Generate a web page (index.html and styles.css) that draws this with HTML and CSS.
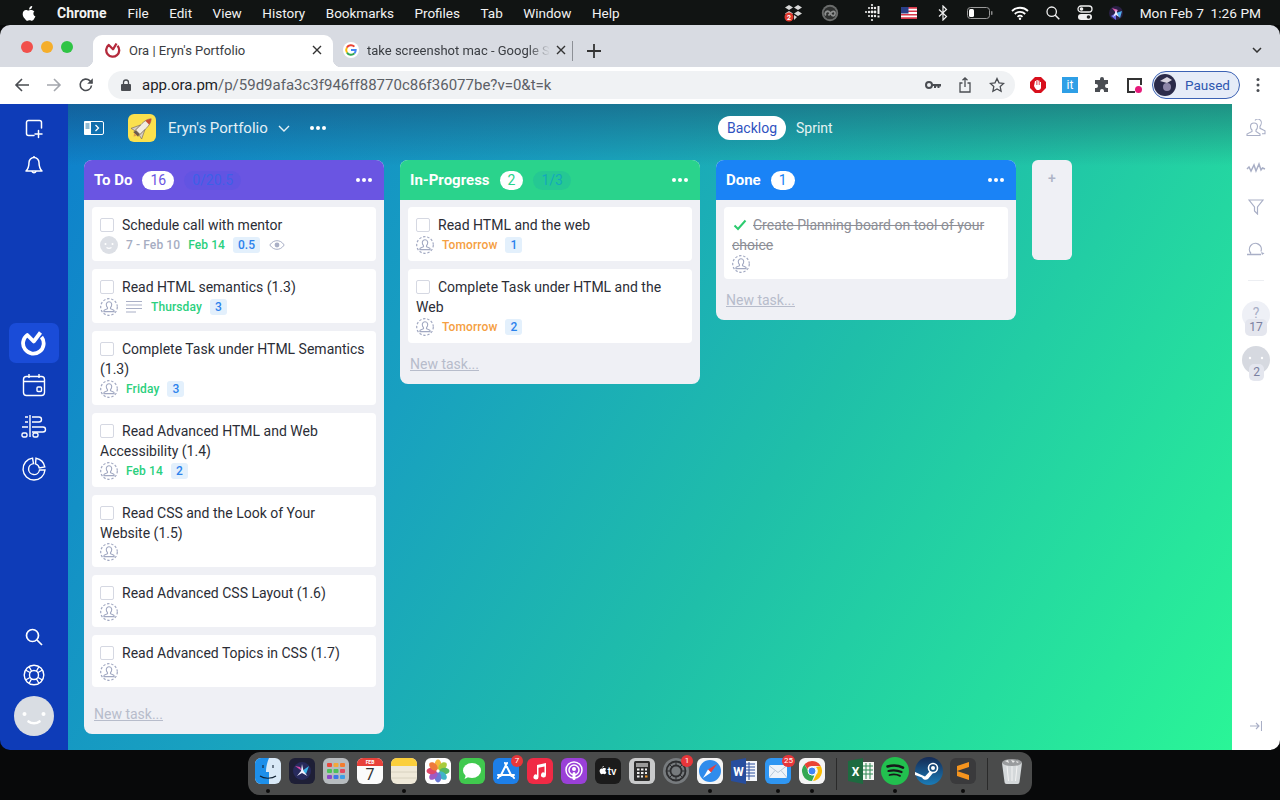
FILE: index.html
```html
<!DOCTYPE html>
<html lang="en">
<head>
<meta charset="utf-8">
<title>Ora | Eryn's Portfolio</title>
<link rel="stylesheet" href="styles.css">
</head>
<body>
<svg class="defs" width="0" height="0">
  <defs>
    <symbol id="assignee" viewBox="0 0 18 18">
      <circle cx="9" cy="9" r="8.300" fill="none" stroke="#a2a9c2" stroke-width="1.200" stroke-dasharray="2.400 1.700"/>
      <path d="M9 3.800a2.700 2.700 0 0 0-2.700 2.700c0 1.300.5 2.400 1.200 3.200v1L4.600 11.900c-.5.2-.7.6-.7 1.100v.6h10.200v-.6c0-.5-.2-.9-.7-1.100l-2.900-1.200v-1c.7-.8 1.200-1.900 1.200-3.200A2.700 2.700 0 0 0 9 3.800z" fill="none" stroke="#a2a9c2" stroke-width="1.100"/>
    </symbol>
    <symbol id="dots" viewBox="0 0 16 4">
      <circle cx="2" cy="2" r="2" fill="#fff"/><circle cx="8" cy="2" r="2" fill="#fff"/><circle cx="14" cy="2" r="2" fill="#fff"/>
    </symbol>
  </defs>
</svg>

<header class="menubar">
  <svg class="apple" viewBox="0 0 14 16" width="14" height="16"><path fill="#fff" d="M10.200 1c.1 1-.3 1.800-.8 2.400-.6.700-1.400 1.100-2.200 1-.1-.9.300-1.800.8-2.400C8.500 1.400 9.500 1 10.200 1zM13 5.700c-1.100.7-1.600 1.600-1.600 2.700 0 1.300.7 2.300 2 2.900-.4 1-.8 1.800-1.400 2.700-.6.900-1.200 1.700-2.100 1.700s-1.200-.5-2.300-.5-1.400.5-2.300.5-1.500-.8-2.200-1.800C1.300 12.400.7 10.600.7 9c0-2.600 1.700-4 3.300-4 .9 0 1.700.6 2.300.6.600 0 1.500-.7 2.600-.7 1.200 0 2.300.5 3.100 1.400z"/></svg>
  <nav class="menus">
    <b class="menu-app">Chrome</b><span>File</span><span>Edit</span><span>View</span><span>History</span><span>Bookmarks</span><span>Profiles</span><span>Tab</span><span>Window</span><span>Help</span>
  </nav>
  <div class="status">
    <svg class="s-drop" viewBox="0 0 20 18" width="20" height="18"><path fill="#d8d8d8" d="M5 1l4 2.500-4 2.500-4-2.500zM14 1l4 2.500-4 2.500-4-2.500zM5 7l4 2.500-4 2.500-4-2.500zM14 7l4 2.500-4 2.500-4-2.500zM10 11l3 2-3 3z"/><circle cx="5" cy="13" r="4.500" fill="#e03a2e"/><text class="st-num" x="5" y="15.500" text-anchor="middle">2</text></svg>
    <svg class="s-cc" viewBox="0 0 22 18" width="22" height="18"><circle cx="11" cy="9" r="8.200" fill="#6a6c6b"/><circle cx="11" cy="9" r="6.300" fill="#2e302f"/><path fill="none" stroke="#8d8f8e" stroke-width="1.800" d="M6.800 11.500c-1.600-2 .2-5 3-4l3.400 4c2 1 4-1.500 2.400-3.800-2-1.500-4 1-6.200 3.800"/></svg>
    <svg class="s-fit" viewBox="0 0 20 20" width="20" height="20"><g fill="#f0f0f0"><circle cx="10" cy="2" r="1.100"/><circle cx="7" cy="5" r="1"/><circle cx="10" cy="5" r="1.200"/><circle cx="13" cy="5" r="1.200"/><circle cx="4" cy="9" r="1"/><circle cx="7" cy="9" r="1.200"/><circle cx="10" cy="9" r="1.400"/><circle cx="13" cy="9" r="1.400"/><circle cx="7" cy="13" r="1"/><circle cx="10" cy="13" r="1.200"/><circle cx="13" cy="13" r="1.200"/><circle cx="10" cy="17" r="1.100"/><rect x="15.500" y="3" width="2" height="8"/><rect x="15.500" y="12.500" width="2" height="2"/></g></svg>
    <svg class="s-flag" viewBox="0 0 16 12" width="16" height="12"><rect width="16" height="12" fill="#fff"/><path fill="#d9384a" d="M0 0h16v1.700H0zM0 3.400h16v1.700H0zM0 6.900h16v1.700H0zM0 10.300h16V12H0z"/><rect width="7.500" height="6.500" fill="#2a3f88"/></svg>
    <svg class="s-bt" viewBox="0 0 10 16" width="10" height="16"><path fill="none" stroke="#f0f0f0" stroke-width="1.200" d="M1 4.500l7.500 7L5 15V1l3.500 3.500-7.500 7"/></svg>
    <svg class="s-batt" viewBox="0 0 26 12" width="26" height="12"><rect x=".5" y=".5" width="22" height="11" rx="3" fill="none" stroke="#9a9a9a"/><rect x="2" y="2" width="5" height="8" rx="1.500" fill="#fff"/><rect x="24" y="4" width="1.500" height="4" rx=".7" fill="#8a8a8a"/></svg>
    <svg class="s-wifi" viewBox="0 0 18 14" width="18" height="14"><path fill="none" stroke="#fff" stroke-width="1.800" d="M1 5a11.500 11.500 0 0 1 16 0M3.800 8a7.500 7.500 0 0 1 10.400 0M6.500 10.800a3.700 3.700 0 0 1 5 0"/><circle cx="9" cy="12.700" r="1.200" fill="#fff"/></svg>
    <svg class="s-search" viewBox="0 0 14 14" width="14" height="14"><circle cx="5.700" cy="5.700" r="4.700" fill="none" stroke="#f0f0f0" stroke-width="1.300"/><path stroke="#f0f0f0" stroke-width="1.500" d="M9 9l4.300 4.300"/></svg>
    <svg class="s-ctl" viewBox="0 0 16 16" width="16" height="16"><rect x="1" y="1" width="14" height="6" rx="3" fill="none" stroke="#f0f0f0" stroke-width="1.300"/><circle cx="4.500" cy="4" r="1.800" fill="#f0f0f0"/><rect x="1" y="9" width="14" height="6" rx="3" fill="#f0f0f0"/><circle cx="11.500" cy="12" r="1.800" fill="#222"/></svg>
    <svg class="s-siri" viewBox="0 0 14 14" width="14" height="14"><circle cx="7" cy="7" r="7" fill="#2a2046"/><path fill="#e05ab0" d="M7 7L3 2l6 2z"/><path fill="#4fb0f0" d="M7 7l6-2-2 7z"/><path fill="#6a6ae8" d="M7 7l-5 3 5 4z"/><path fill="#eef" d="M7 3l1 4 2 4-3-2-3 2 2-4z"/></svg>
    <span class="clock">Mon Feb 7&nbsp;&nbsp;1:26 PM</span>
  </div>
</header>

<div class="window">
  <div class="tabstrip">
    <div class="lights"><i class="l-red"></i><i class="l-yel"></i><i class="l-grn"></i></div>
    <div class="tab tab-active">
      <svg viewBox="0 0 16 16" width="16" height="16"><path fill="none" stroke="#b42a3c" stroke-width="2.300" stroke-linejoin="round" d="M12.500 3.800A6.500 6.500 0 1 1 3.800 3L8 7.300 11.500 1.500"/></svg>
      <span class="tab-title">Ora | Eryn's Portfolio</span>
      <svg class="tab-x" viewBox="0 0 10 10" width="10" height="10"><path stroke="#333" stroke-width="1.400" d="M1 1l8 8M9 1L1 9"/></svg>
    </div>
    <div class="tab tab-idle">
      <svg viewBox="0 0 16 16" width="16" height="16"><circle cx="8" cy="8" r="8" fill="#fff"/><path fill="none" stroke="#4285f4" stroke-width="2" d="M8 8h4.700a4.800 4.800 0 0 1-1.300 3.400"/><path fill="none" stroke="#34a853" stroke-width="2" d="M11.400 11.400A4.800 4.800 0 0 1 3.900 10.500"/><path fill="none" stroke="#fbbc05" stroke-width="2" d="M3.900 10.500a4.800 4.800 0 0 1 0-5"/><path fill="none" stroke="#ea4335" stroke-width="2" d="M3.900 5.500a4.800 4.800 0 0 1 7.500-.9"/></svg>
      <span class="tab-title tab-fade">take screenshot mac - Google S</span>
      <svg class="tab-x" viewBox="0 0 10 10" width="10" height="10"><path stroke="#333" stroke-width="1.400" d="M1 1l8 8M9 1L1 9"/></svg>
    </div>
    <i class="tab-sep"></i>
    <svg class="tab-plus" viewBox="0 0 14 14" width="14" height="14"><path stroke="#333" stroke-width="1.800" d="M7 0v14M0 7h14"/></svg>
    <svg class="tab-more" viewBox="0 0 10 6" width="10" height="6"><path fill="none" stroke="#333" stroke-width="1.500" d="M1 1l4 4 4-4"/></svg>
  </div>

  <div class="toolbar">
    <svg class="nav" viewBox="0 0 16 16" width="16" height="16"><path fill="none" stroke="#4a4d52" stroke-width="1.600" d="M15 8H2M8 2L2 8l6 6"/></svg>
    <svg class="nav" viewBox="0 0 16 16" width="16" height="16"><path fill="none" stroke="#a4a7ad" stroke-width="1.600" d="M1 8h13M8 2l6 6-6 6"/></svg>
    <svg class="nav" viewBox="0 0 16 16" width="16" height="16"><path fill="none" stroke="#4a4d52" stroke-width="1.600" d="M13.500 8.500A5.700 5.700 0 1 1 11.800 3.700L14 6"/><path fill="#4a4d52" d="M14.800 1.200v5.600H9.200z"/></svg>
    <div class="omnibox">
      <svg viewBox="0 0 10 12" width="10" height="12"><rect y="5" width="10" height="7" rx="1" fill="#4a4d52"/><path fill="none" stroke="#4a4d52" stroke-width="1.300" d="M2.500 5V3.500a2.500 2.500 0 0 1 5 0V5"/></svg>
      <span class="url"><span class="url-host">app.ora.pm</span>/p/59d9afa3c3f946ff88770c86f36077be?v=0&amp;t=k</span>
      <svg class="o-key" viewBox="0 0 16 10" width="16" height="10"><circle cx="4" cy="5" r="3" fill="none" stroke="#4a4d52" stroke-width="2"/><path fill="#4a4d52" d="M7 4h9v2.500h-1.500V8h-2V6.500h-1.500V8H9V6H7z"/></svg>
      <svg class="o-share" viewBox="0 0 14 16" width="14" height="16"><path fill="none" stroke="#4a4d52" stroke-width="1.300" d="M4.500 6H2v9h10V6H9.500M7 10V1M4.500 3.300L7 1l2.500 2.300"/></svg>
      <svg class="o-star" viewBox="0 0 16 16" width="16" height="16"><path fill="none" stroke="#4a4d52" stroke-width="1.300" d="M8 1.500l2 4.300 4.700.6-3.500 3.200.9 4.700L8 12l-4.100 2.300.9-4.700L1.300 6.400 6 5.800z"/></svg>
    </div>
    <svg class="x-stop" viewBox="0 0 16 16" width="16" height="16"><path fill="#d80f1c" d="M5 0h6l5 5v6l-5 5H5l-5-5V5z"/><path fill="#fff" d="M5 4h1v4h.5V3h1.200v5h.5V3.500h1.200V8h.5V5h1.100v5.500c0 1.500-1 2.500-2.500 2.500H7.500C6 13 5 11 4 9z"/></svg>
    <span class="x-it">it</span>
    <svg class="x-puzzle" viewBox="0 0 16 16" width="16" height="16"><path fill="#4a4d52" d="M6 2a2 2 0 0 1 4 0v1h4v4h-1a2 2 0 0 0 0 4h1v4h-4v-1a2 2 0 0 0-4 0v1H1v-4h1a2 2 0 0 0 0-4H1V3h5z"/></svg>
    <svg class="x-sq" viewBox="0 0 16 16" width="16" height="16"><path fill="none" stroke="#333" stroke-width="2" d="M15 8V2H2v13h7"/><circle cx="12.500" cy="12.500" r="3.500" fill="#e6197a"/></svg>
    <div class="paused">
      <svg viewBox="0 0 22 22" width="22" height="22"><circle cx="11" cy="11" r="11" fill="#2b2b4a"/><path fill="#d6d2de" d="M6 7l7-4 5 3-5 3z"/><circle cx="13" cy="13" r="4" fill="#8d86a8"/></svg>
      <span>Paused</span>
    </div>
    <svg class="x-dots" viewBox="0 0 4 16" width="4" height="16"><circle cx="2" cy="2.500" r="1.500" fill="#4a4d52"/><circle cx="2" cy="8" r="1.500" fill="#4a4d52"/><circle cx="2" cy="13.500" r="1.500" fill="#4a4d52"/></svg>
  </div>

  <div class="app">
    <aside class="rail">
      <div class="rail-top">
        <svg viewBox="0 0 20 20" width="20" height="20"><path fill="none" stroke="#fff" stroke-width="1.500" stroke-linecap="round" d="M17.500 9V3.500a2 2 0 0 0-2-2h-11a2 2 0 0 0-2 2v11a2 2 0 0 0 2 2H10M14.500 11.500v7M11 15h7"/></svg>
        <svg viewBox="0 0 20 22" width="20" height="22"><path fill="none" stroke="#fff" stroke-width="1.500" stroke-linejoin="round" d="M10 2.500a5 5 0 0 0-5 5c0 5-1 6.500-3 8.500h16c-2-2-3-3.500-3-8.500a5 5 0 0 0-5-5zM8 16.500a2.200 2.200 0 0 0 4 0M10 1v1.500"/></svg>
      </div>
      <div class="rail-mid">
        <div class="rail-active">
          <svg viewBox="0 0 26 26" width="26" height="26"><path fill="none" stroke="#fff" stroke-width="3.800" stroke-linejoin="round" d="M20.500 7A10.300 10.300 0 1 1 6.300 5L12.700 11.500 19.500 2.500"/></svg>
        </div>
        <svg viewBox="0 0 24 24" width="24" height="24"><rect x="1.500" y="3.500" width="21" height="19" rx="3" fill="none" stroke="#fff" stroke-width="1.400"/><path stroke="#fff" stroke-width="1.400" d="M1.500 8.500h21M7 1v4M17 1v4"/><rect x="15" y="14" width="4.500" height="4.500" rx="1" fill="none" stroke="#fff" stroke-width="1.400"/></svg>
        <svg viewBox="0 0 26 24" width="26" height="24"><path fill="none" stroke="#fff" stroke-width="1.400" d="M9 1v22M4 3h3M4 8h3M11 3h7a2.500 2.500 0 0 1 0 5h-7M1 13h6M11 13h11a2.500 2.500 0 0 1 0 5H11" transform="translate(0 -1)"/><rect x="1" y="18" width="5" height="4" rx="1.500" fill="none" stroke="#fff" stroke-width="1.400"/><rect x="12" y="18" width="5" height="4" rx="1.500" fill="none" stroke="#fff" stroke-width="1.400"/></svg>
        <svg viewBox="0 0 24 24" width="24" height="24"><g fill="none" stroke="#fff" stroke-width="1.400"><path d="M10.500 1.100A11 11 0 1 0 23 13h-5.500a5.500 5.500 0 1 1-6-6.400z"/><path d="M14 1.200A11 11 0 0 1 22.800 10l-5.500 1A5.500 5.500 0 0 0 13.500 6.800z"/></g></svg>
      </div>
      <div class="rail-bot">
        <svg class="rail-search" viewBox="0 0 18 18" width="18" height="18"><circle cx="7.500" cy="7.500" r="6" fill="none" stroke="#fff" stroke-width="1.700"/><path stroke="#fff" stroke-width="1.700" d="M12 12l5 5"/></svg>
        <svg viewBox="0 0 22 22" width="22" height="22"><g fill="none" stroke="#fff" stroke-width="1.400"><circle cx="11" cy="11" r="9.800"/><circle cx="11" cy="11" r="4.500"/><path d="M6 2.500l2.500 4.500M2.500 6L7 8.500M16 2.500L13.500 7M19.500 6L15 8.500M6 19.500L8.500 15M2.500 16L7 13.500M16 19.500L13.500 15M19.500 16L15 13.500"/></g></svg>
        <div class="face"><svg viewBox="0 0 40 40" width="40" height="40"><circle cx="10.500" cy="18" r="2" fill="#fff"/><circle cx="29.500" cy="18" r="2" fill="#fff"/><path fill="none" stroke="#fff" stroke-width="2.600" stroke-linecap="round" d="M14.500 25.500c3 2.400 8 2.400 11 0"/></svg></div>
      </div>
    </aside>

    <main class="board">
      <div class="board-head">
        <div class="bh-left">
          <svg class="bh-toggle" viewBox="0 0 20 14" width="20" height="14"><rect width="7" height="14" rx="1" fill="#fff"/><rect x=".5" y=".5" width="19" height="13" rx="1.500" fill="none" stroke="#fff"/><path fill="none" stroke="#fff" stroke-width="1.300" d="M11.500 4l3 3-3 3"/><path stroke="#2576a8" d="M1.500 3h4M1.500 5h4M1.500 7h4"/></svg>
          <div class="proj-icon">
            <svg viewBox="0 0 28 28" width="28" height="28"><g transform="rotate(45 14 14)"><path fill="#f2ece2" stroke="#75665c" stroke-width=".6" d="M14 1c2.500 3 3.200 6 3.200 10v9h-6.400v-9c0-4 .7-7 3.200-10z"/><path fill="#c9492f" d="M14 1c1.500 1.800 2.400 3.600 2.800 5.500h-5.600C11.600 4.600 12.500 2.800 14 1z"/><path fill="#d8cfc2" stroke="#75665c" stroke-width=".6" d="M10.800 13L6.500 22l4.300-1zM17.200 13l4.300 9-4.300-1z"/><path fill="#6b5a52" d="M11.500 20h5l1 3h-7z"/><path fill="#e3a14a" d="M12 23h4l-2 3z"/></g></svg>
          </div>
          <span class="proj-name">Eryn's Portfolio</span>
          <svg class="proj-chev" viewBox="0 0 12 7" width="12" height="7"><path fill="none" stroke="#e6f1f6" stroke-width="1.400" d="M1 1l5 5 5-5"/></svg>
          <svg class="proj-dots" viewBox="0 0 16 4" width="16" height="4"><use href="#dots"/></svg>
        </div>
        <div class="views"><span class="view-on">Backlog</span><span class="view-off">Sprint</span></div>
      </div>

      <div class="columns">
        <section class="col">
          <div class="col-head h-purple">
            <span class="col-title">To Do</span><span class="count c-purple">16</span><span class="quota q-purple">0/20.5</span>
            <svg class="col-dots" viewBox="0 0 16 4" width="16" height="4"><use href="#dots"/></svg>
          </div>
          <div class="cards cards-scroll">
            <article class="card">
              <p class="task"><i class="box"></i>Schedule call with mentor</p>
              <div class="meta">
                <svg class="av" viewBox="0 0 18 18" width="18" height="18"><circle cx="9" cy="9" r="9" fill="#dcdfe5"/><circle cx="5.500" cy="8" r="1" fill="#fff"/><circle cx="12.500" cy="8" r="1" fill="#fff"/><path fill="none" stroke="#fff" stroke-width="1.200" d="M6.500 11.500c1.500 1 3.500 1 5 0"/></svg>
                <span class="d d-gray">7 - Feb 10</span><span class="d d-green">Feb 14</span><span class="chip">0.5</span>
                <svg class="eye" viewBox="0 0 16 10" width="16" height="10"><path fill="none" stroke="#a9afc6" d="M.8 5C3 1.800 5.500 .7 8 .7s5 1.100 7.200 4.300C13 8.200 10.500 9.300 8 9.300S3 8.200.8 5z"/><circle cx="8" cy="5" r="2.400" fill="#a9afc6"/></svg>
              </div>
            </article>
            <article class="card">
              <p class="task"><i class="box"></i>Read HTML semantics (1.3)</p>
              <div class="meta">
                <svg class="av" width="18" height="18"><use href="#assignee"/></svg>
                <svg class="lines" viewBox="0 0 16 12" width="16" height="12"><path stroke="#a9afc6" d="M0 .5h16M0 4h16M0 7.500h16M0 11h10"/></svg>
                <span class="d d-green">Thursday</span><span class="chip">3</span>
              </div>
            </article>
            <article class="card">
              <p class="task"><i class="box"></i>Complete Task under HTML Semantics (1.3)</p>
              <div class="meta">
                <svg class="av" width="18" height="18"><use href="#assignee"/></svg>
                <span class="d d-green">Friday</span><span class="chip">3</span>
              </div>
            </article>
            <article class="card">
              <p class="task"><i class="box"></i>Read Advanced HTML and Web Accessibility (1.4)</p>
              <div class="meta">
                <svg class="av" width="18" height="18"><use href="#assignee"/></svg>
                <span class="d d-green">Feb 14</span><span class="chip">2</span>
              </div>
            </article>
            <article class="card">
              <p class="task"><i class="box"></i>Read CSS and the Look of Your Website (1.5)</p>
              <div class="meta meta-bare"><svg class="av" width="18" height="18"><use href="#assignee"/></svg></div>
            </article>
            <article class="card">
              <p class="task"><i class="box"></i>Read Advanced CSS Layout (1.6)</p>
              <div class="meta meta-bare"><svg class="av" width="18" height="18"><use href="#assignee"/></svg></div>
            </article>
            <article class="card">
              <p class="task"><i class="box"></i>Read Advanced Topics in CSS (1.7)</p>
              <div class="meta meta-bare"><svg class="av" width="18" height="18"><use href="#assignee"/></svg></div>
            </article>
          </div>
          <a class="newtask">New task...</a>
        </section>

        <section class="col">
          <div class="col-head h-green">
            <span class="col-title">In-Progress</span><span class="count c-green">2</span><span class="quota q-green">1/3</span>
            <svg class="col-dots" viewBox="0 0 16 4" width="16" height="4"><use href="#dots"/></svg>
          </div>
          <div class="cards">
            <article class="card">
              <p class="task"><i class="box"></i>Read HTML and the web</p>
              <div class="meta">
                <svg class="av" width="18" height="18"><use href="#assignee"/></svg>
                <span class="d d-orange">Tomorrow</span><span class="chip">1</span>
              </div>
            </article>
            <article class="card">
              <p class="task"><i class="box"></i>Complete Task under HTML and the Web</p>
              <div class="meta">
                <svg class="av" width="18" height="18"><use href="#assignee"/></svg>
                <span class="d d-orange">Tomorrow</span><span class="chip">2</span>
              </div>
            </article>
          </div>
          <a class="newtask">New task...</a>
        </section>

        <section class="col">
          <div class="col-head h-blue">
            <span class="col-title">Done</span><span class="count c-blue">1</span>
            <svg class="col-dots" viewBox="0 0 16 4" width="16" height="4"><use href="#dots"/></svg>
          </div>
          <div class="cards">
            <article class="card">
              <p class="task task-done"><svg class="tick" viewBox="0 0 14 12" width="14" height="12"><path fill="none" stroke="#2ccb6f" stroke-width="2" d="M1.500 6.500L5 10l7.500-8.500"/></svg><s>Create Planning board on tool of your choice</s></p>
              <div class="meta meta-bare"><svg class="av" width="18" height="18"><use href="#assignee"/></svg></div>
            </article>
          </div>
          <a class="newtask">New task...</a>
        </section>

        <div class="col-add">+</div>
      </div>
    </main>

    <aside class="side">
      <svg viewBox="0 0 20 18" width="20" height="18"><path fill="none" stroke="#a9afc6" stroke-width="1.100" d="M1 16.500v-1.500l5-2.500v-1.500c-1-1-1.500-2-1.500-3.500a3.500 3.500 0 0 1 3.500-3.500 3.500 3.500 0 0 1 3.500 3.500c0 1.500-.5 2.500-1.500 3.500v1.500l4 2.500v1.500zM9 1.500a3.500 3.500 0 0 1 5.500-.2c1.200 1.200 1 4-.5 6v2l5 2.500v3h-3"/></svg>
      <svg viewBox="0 0 20 12" width="20" height="12"><path fill="none" stroke="#a9afc6" stroke-width="1.500" d="M1 7l2-2 2 4 3-6 2 6 3-7 2 6 1.500-2 2.500 1"/></svg>
      <svg viewBox="0 0 16 16" width="16" height="16"><path fill="none" stroke="#a9afc6" stroke-width="1.200" d="M1 1h14L9.500 8v7l-3-3V8z"/></svg>
      <svg viewBox="0 0 20 16" width="20" height="16"><path fill="none" stroke="#a9afc6" stroke-width="1.300" d="M5 13.500A6 6 0 1 1 15 11.500M1 14.500h14"/><path fill="#a9afc6" d="M15 12l3.500 1.200L16 15z"/></svg>
      <i class="side-rule"></i>
      <div class="who who-q"><span class="who-mark">?</span><span class="who-num num-wide">17</span></div>
      <div class="who who-gray"><svg viewBox="0 0 28 28" width="28" height="28"><circle cx="8" cy="12" r="1.200" fill="#fff"/><circle cx="20" cy="12" r="1.200" fill="#fff"/></svg><span class="who-num">2</span></div>
      <svg class="side-collapse" viewBox="0 0 12 12" width="12" height="12"><path fill="none" stroke="#a9afc6" stroke-width="1.100" d="M0 6h9M6 3l3 3-3 3M11.500 1v10"/></svg>
    </aside>
  </div>
</div>

<footer class="dockbar">
  <div class="dock">
    <div class="di on"><svg viewBox="0 0 26 26"><rect width="26" height="26" rx="6" fill="#d9e9f7"/><path fill="#1d8fea" d="M6 0h8c-2 5-3 9-3 14h3v12H6a6 6 0 0 1-6-6V6a6 6 0 0 1 6-6z"/><path fill="none" stroke="#123" stroke-width="1.100" d="M5 18c4 3 12 3 16 0M8 7v3M18 7v3"/></svg></div>
    <div class="di"><svg viewBox="0 0 26 26"><rect width="26" height="26" rx="6" fill="#1e1f36"/><circle cx="13" cy="13" r="9" fill="#272a5c"/><path fill="#d94aa8" d="M13 13L6 8l5 1z"/><path fill="#3ab4e8" d="M13 13l7-5-3 8z"/><path fill="#f0f0ff" d="M13 6l1.500 7 4 5-5.500-3-5 3 4-5z"/></svg></div>
    <div class="di"><svg viewBox="0 0 26 26"><rect width="26" height="26" rx="6" fill="#b7bcbf"/><g><rect x="4" y="5" width="5" height="4" rx="1" fill="#e9463c"/><rect x="10.500" y="5" width="5" height="4" rx="1" fill="#f3a83a"/><rect x="17" y="5" width="5" height="4" rx="1" fill="#f37c2e"/><rect x="4" y="11" width="5" height="4" rx="1" fill="#4dc15a"/><rect x="10.500" y="11" width="5" height="4" rx="1" fill="#4dc15a"/><rect x="17" y="11" width="5" height="4" rx="1" fill="#e34a60"/><rect x="4" y="17" width="5" height="4" rx="1" fill="#8e47c8"/><rect x="10.500" y="17" width="5" height="4" rx="1" fill="#3d78e6"/><rect x="17" y="17" width="5" height="4" rx="1" fill="#3d9fe6"/></g></svg></div>
    <div class="di"><svg viewBox="0 0 26 26"><rect width="26" height="26" rx="6" fill="#fbfbfb"/><path fill="#e8413a" d="M0 8V6a6 6 0 0 1 6-6h14a6 6 0 0 1 6 6v2z"/><text class="dk dk-feb" x="13" y="6.300" text-anchor="middle">FEB</text><text class="dk dk-day" x="13" y="22" text-anchor="middle">7</text></svg></div>
    <div class="di on"><svg viewBox="0 0 26 26"><rect width="26" height="26" rx="6" fill="#efe9d9"/><path fill="#fbcf3b" d="M0 8V6a6 6 0 0 1 6-6h14a6 6 0 0 1 6 6v2z"/><path stroke="#d8d2c0" d="M0 14h26M0 20h26"/></svg></div>
    <div class="di"><svg viewBox="0 0 26 26"><rect width="26" height="26" rx="6" fill="#fff"/><g transform="translate(13 13)"><ellipse cy="-6.500" rx="3.300" ry="5" fill="#f6b73c"/><ellipse cy="-6.500" rx="3.300" ry="5" fill="#a8cc3c" transform="rotate(45)"/><ellipse cy="-6.500" rx="3.300" ry="5" fill="#55b860" transform="rotate(90)"/><ellipse cy="-6.500" rx="3.300" ry="5" fill="#3fb4c8" transform="rotate(135)"/><ellipse cy="-6.500" rx="3.300" ry="5" fill="#6a78d6" transform="rotate(180)"/><ellipse cy="-6.500" rx="3.300" ry="5" fill="#a05ac4" transform="rotate(225)"/><ellipse cy="-6.500" rx="3.300" ry="5" fill="#e0486a" transform="rotate(270)"/><ellipse cy="-6.500" rx="3.300" ry="5" fill="#ee7a3c" transform="rotate(315)"/></g></svg></div>
    <div class="di"><svg viewBox="0 0 26 26"><rect width="26" height="26" rx="6" fill="#40c94e"/><ellipse cx="13" cy="12.500" rx="9" ry="7.500" fill="#fff"/><path fill="#fff" d="M7 17l-1.500 4 5-2.500z"/></svg></div>
    <div class="di"><svg viewBox="0 0 26 26"><rect width="26" height="26" rx="6" fill="#1d7fe8"/><path fill="none" stroke="#fff" stroke-width="2" stroke-linecap="round" d="M14 5L7.500 18M12 5l6.500 13M5 17h16M5 20l1.500-2M21 20l-1.500-2"/></svg><span class="badge">7</span></div>
    <div class="di"><svg viewBox="0 0 26 26"><rect width="26" height="26" rx="6" fill="#f02a45"/><path fill="#fff" d="M10 7l9-2v12a2.500 2.500 0 1 1-1.500-2.300V8.500l-6 1.300V19a2.500 2.500 0 1 1-1.500-2.300z"/></svg></div>
    <div class="di"><svg viewBox="0 0 26 26"><rect width="26" height="26" rx="6" fill="#9a40d8"/><g fill="none" stroke="#fff" stroke-width="1.500"><circle cx="13" cy="12" r="8"/><circle cx="13" cy="12" r="5"/></g><circle cx="13" cy="11" r="2" fill="#fff"/><rect x="11.500" y="14" width="3" height="8" rx="1.500" fill="#fff"/></svg></div>
    <div class="di"><svg viewBox="0 0 26 26"><rect width="26" height="26" rx="6" fill="#1b1b1b"/><path fill="#fff" d="M7.500 10.500c1 0 1.500-.4 2-.4.8 0 1.300.4 1.700.9-1.300.8-1.100 2.600.2 3.200-.4 1-1 2-1.800 2-.6 0-.8-.4-1.500-.4s-1 .4-1.500.4c-1 0-2-1.800-2-3.200 0-1.600 1-2.500 2-2.500.5 0 .8.300 1 .300zM8.800 8c0 .9-.7 1.700-1.500 1.600 0-.9.700-1.600 1.500-1.600z"/><text class="dk dk-tv" x="17" y="17" text-anchor="middle">tv</text></svg></div>
    <div class="di"><svg viewBox="0 0 26 26"><rect width="26" height="26" rx="6" fill="#c9cacb"/><rect x="5" y="3" width="16" height="20" rx="1.500" fill="#2c2c2c"/><rect x="7" y="5" width="12" height="4" fill="#9a9a9a"/><path stroke="#eee" stroke-width="2" stroke-dasharray="2.500 1.500" d="M8 11.500h10M8 15h10M8 18.500h6"/><rect x="16" y="17.500" width="2.500" height="2" fill="#f09a2e"/></svg></div>
    <div class="di"><svg viewBox="0 0 26 26"><circle cx="13" cy="13" r="13" fill="#777b7e"/><g fill="none" stroke="#2d2e30"><circle cx="13" cy="13" r="9.500" stroke-width="1.800"/><circle cx="13" cy="13" r="5.500" stroke-width="1.800"/><path d="M13 7.500V3.500M18.500 13h4M13 18.500v4M7.500 13h-4M9 9L6 6M17 9l3-3M9 17l-3 3M17 17l3 3"/></g></svg><span class="badge">1</span></div>
    <div class="di on"><svg viewBox="0 0 26 26"><rect width="26" height="26" rx="6" fill="#f4f4f4"/><circle cx="13" cy="13" r="11" fill="#2f8cec"/><path fill="#ea3e3a" d="M20 6l-9 5.500 3 3z"/><path fill="#fff" d="M6 20l8-5.500-3-3z"/></svg></div>
    <div class="di"><svg viewBox="0 0 26 26"><rect x="10" y="3" width="16" height="20" fill="#f4f6fa"/><path stroke="#2a4f9e" stroke-width="1" d="M14 6h10M14 9h10M14 12h10M14 15h10M14 18h10M18 4v18"/><path fill="#274e9e" d="M0 3l15-3v26L0 23z"/><text class="dk dk-w" x="7.500" y="17.500" text-anchor="middle">W</text></svg></div>
    <div class="di on"><svg viewBox="0 0 26 26"><rect width="26" height="26" rx="6" fill="#2f96f2"/><rect x="4" y="7" width="18" height="13" rx="1.500" fill="#eef3f9"/><path fill="none" stroke="#b8c8d8" d="M4.500 8L13 14.500 21.500 8M4.500 19L10 12.500M21.500 19L16 12.500"/></svg><span class="badge">25</span></div>
    <div class="di on"><svg viewBox="0 0 26 26"><rect width="26" height="26" rx="6" fill="#f5f5f5"/><path fill="#ea4335" d="M13 3a10 10 0 0 1 8.700 5H13a5 5 0 0 0-4.700 3.300L5.500 6.500A10 10 0 0 1 13 3z"/><path fill="#fbbc05" d="M21.700 8A10 10 0 0 1 14 23l3.300-6.500A5 5 0 0 0 17 9z"/><path fill="#34a853" d="M5.500 6.500l3.800 6.500a5 5 0 0 0 6 4.500L13 23A10 10 0 0 1 5.500 6.500z"/><circle cx="13" cy="13" r="4" fill="#4285f4" stroke="#fff"/></svg></div>
    <i class="dock-sep"></i>
    <div class="di"><svg viewBox="0 0 26 26"><rect x="10" y="4" width="16" height="18" fill="#f4f6f2"/><path stroke="#2e8a55" d="M14 8h11M14 12h11M14 16h11M18 5v16M22 5v16"/><path fill="#1d6b40" d="M0 3l15-3v26L0 23z"/><text class="dk dk-w" x="7.500" y="17.500" text-anchor="middle">X</text></svg></div>
    <div class="di on"><svg viewBox="0 0 26 26"><circle cx="13" cy="13" r="14" fill="#22c04f"/><path fill="none" stroke="#17181a" stroke-linecap="round" stroke-width="2.600" d="M5.500 8.500c5-1.500 11-1.200 15.500 1.200"/><path fill="none" stroke="#17181a" stroke-linecap="round" stroke-width="2.200" d="M6.500 13c4.500-1.200 9-.9 13 1.100"/><path fill="none" stroke="#17181a" stroke-linecap="round" stroke-width="1.800" d="M7.500 17c3.500-.9 7.500-.7 10.500 .9"/></svg></div>
    <div class="di"><svg viewBox="0 0 26 26"><defs><linearGradient id="steamg" x1="0" y1="0" x2="0" y2="1"><stop offset="0" stop-color="#152a54"/><stop offset="1" stop-color="#1a7cb8"/></linearGradient></defs><circle cx="13" cy="13" r="14" fill="url(#steamg)"/><circle cx="17" cy="10" r="4.500" fill="none" stroke="#fff" stroke-width="1.600"/><circle cx="17" cy="10" r="2" fill="#fff"/><path fill="#fff" d="M-1 14l10 4.500 5-5.500 3 2-5 6a4 4 0 0 1-6-1.500L-1 17z"/></svg></div>
    <div class="di on"><svg viewBox="0 0 26 26"><rect width="26" height="26" rx="6" fill="#3a3a3c"/><path fill="#f5941e" d="M19 4v5l-12 4V8zM7 13l12 4v5L7 18z"/></svg></div>
    <i class="dock-sep"></i>
    <div class="di"><svg viewBox="0 0 26 26"><path fill="#d4d8da" d="M3 5h20l-2.500 19a2 2 0 0 1-2 2h-11a2 2 0 0 1-2-2z"/><path stroke="#f2f2f2" d="M8 8l1.500 15M13 8v15M18 8l-1.500 15"/><ellipse cx="13" cy="4.500" rx="10" ry="3.500" fill="#9a9c9e"/><path fill="#e8e8e8" d="M6 3l3-1 1 3zM12 2l4 1-2 2zM17 3l3 1-2 1z"/></svg></div>
  </div>
</footer>
</body>
</html>
```

FILE: styles.css
```css
* { box-sizing: border-box; }
html, body { margin: 0; padding: 0; }
body {
  width: 1280px;
  height: 800px;
  overflow: hidden;
  background: #08090a;
  font-family: Roboto, "Liberation Sans", sans-serif;
  display: flex;
  flex-direction: column;
}
.defs { position: absolute; }
svg { display: block; flex: none; }

/* macOS menu bar */
.menubar {
  height: 25px;
  flex: none;
  background: #111413;
  color: #f2f2f2;
  display: flex;
  align-items: center;
  padding-left: 22px;
  font-size: 13.500px;
}
.menus { display: flex; align-items: center; margin-left: 21px; gap: 20.500px; }
.menu-app { font-weight: 700; font-size: 14px; margin-right: .5px; }
.status { margin-left: auto; display: flex; align-items: center; padding-right: 19px; }
.s-cc { margin-left: 15px; }
.s-fit { margin-left: 21px; }
.s-flag { margin-left: 19px; }
.s-bt { margin-left: 21px; }
.s-batt { margin-left: 19px; }
.s-wifi { margin-left: 18px; }
.s-search { margin-left: 17px; }
.s-ctl { margin-left: 17px; }
.s-siri { margin-left: 16px; }
.clock { margin-left: 17px; font-size: 13.700px; }
.st-num { font: 700 7px Roboto, sans-serif; fill: #fff; }

/* browser window */
.window { height: 725px; flex: none; display: flex; flex-direction: column; border-radius: 10px; overflow: hidden; }
.tabstrip {
  height: 42px;
  flex: none;
  background: #d8dbe2;
  display: flex;
  align-items: flex-end;
  padding-left: 21px;
  position: relative;
}
.lights { display: flex; gap: 8px; align-self: flex-start; margin-top: 16px; width: 72px; }
.lights i { width: 12px; height: 12px; border-radius: 50%; }
.l-red { background: #f1504c; }
.l-yel { background: #f5ae2b; }
.l-grn { background: #2fc445; }
.tab {
  height: 32px;
  display: flex;
  align-items: center;
  font-size: 13px;
  color: #3a3d42;
  padding-bottom: 2px;
}
.tab-active { width: 240px; background: #fff; border-radius: 9px 9px 0 0; padding: 0 11px 2px 12px; position: relative; }
.tab-active::before, .tab-active::after { content: ""; position: absolute; bottom: 0; width: 8px; height: 8px; }
.tab-active::before { left: -8px; background: radial-gradient(circle at 0 0, transparent 8px, #fff 8.500px); }
.tab-active::after { right: -8px; background: radial-gradient(circle at 100% 0, transparent 8px, #fff 8.500px); }
.tab-idle { width: 239px; padding: 0 6px 2px 10px; }
.tab-title { margin-left: 8px; white-space: nowrap; flex: 1; min-width: 0; }
.tab-fade { -webkit-mask-image: linear-gradient(to right, #000 88%, transparent 100%); mask-image: linear-gradient(to right, #000 88%, transparent 100%); }
.tab-x { margin-left: 6px; }
.tab-sep { width: 1px; height: 20px; background: #8d9096; margin: 0 0 6px 0; }
.tab-plus { margin: 0 0 9px 14px; }
.tab-more { margin: 0 18px 14px auto; }

.toolbar {
  height: 37px;
  flex: none;
  background: #fff;
  display: flex;
  align-items: center;
  padding: 0 0 1px 14px;
}
.toolbar .nav + .nav { margin-left: 16px; }
.omnibox {
  margin-left: 14px;
  width: 907px;
  height: 28px;
  border-radius: 14px;
  background: #f0f2f4;
  display: flex;
  align-items: center;
  padding: 0 10px 0 13px;
}
.url { margin-left: 11px; font-size: 15px; color: #5c6066; white-space: nowrap; }
.url-host { color: #202226; }
.o-key { margin-left: auto; }
.o-share { margin-left: 17px; }
.o-star { margin-left: 17px; }
.x-stop { margin-left: 15px; }
.x-it { margin-left: 16px; width: 16px; height: 16px; background: #2e9fe6; color: #fff; font-size: 12px; line-height: 16px; text-align: center; }
.x-puzzle { margin-left: 16px; }
.x-sq { margin-left: 16px; }
.paused {
  margin-left: 10px;
  width: 88px;
  height: 28px;
  border: 1.500px solid #3c62b4;
  border-radius: 14px;
  background: #e6ecf8;
  color: #2f57b0;
  font-size: 13.500px;
  display: flex;
  align-items: center;
  padding-left: 1px;
  gap: 9px;
}
.x-dots { margin-left: 16px; }

/* Ora app */
.app { flex: 1; display: flex; min-height: 0; }
.rail {
  width: 68px;
  flex: none;
  background: #0e3cb8;
  display: flex;
  flex-direction: column;
  align-items: center;
  padding: 15px 0 14px;
}
.rail-top { display: flex; flex-direction: column; align-items: center; gap: 16px; }
.rail-mid { display: flex; flex-direction: column; align-items: center; gap: 18px; margin-top: 146px; }
.rail-active { width: 50px; height: 40px; border-radius: 7px; background: #1a4cd8; display: flex; align-items: center; justify-content: center; margin-bottom: -8px; }
.rail-bot { margin-top: auto; display: flex; flex-direction: column; align-items: center; gap: 17px; }
.rail-search { margin-bottom: 1px; }
.face { width: 40px; height: 40px; border-radius: 50%; background: #d9dde3; margin-top: -7px; }

.board {
  flex: 1;
  min-width: 0;
  display: flex;
  flex-direction: column;
  background:
    linear-gradient(to bottom, rgba(25, 55, 90, .42), rgba(25, 55, 90, 0) 62px),
    linear-gradient(122deg, #0e80cc 0%, #18a0c0 33%, #1fbfa9 60%, #2af597 100%);
}
.board-head { height: 56px; flex: none; display: flex; align-items: center; padding: 0 0 8px 16px; }
.bh-left { display: flex; align-items: center; width: 634px; }
.proj-icon { width: 28px; height: 28px; border-radius: 6px; background: #fbe14e; margin-left: 24px; overflow: hidden; }
.proj-name { margin-left: 12px; font-size: 15px; color: #e3eff5; }
.proj-chev { margin-left: 10px; }
.proj-dots { margin-left: 20px; }
.views { display: flex; align-items: center; font-size: 14px; }
.view-on { background: #fff; color: #2f52c0; height: 24px; line-height: 24px; padding: 0 9px; border-radius: 12px; }
.view-off { color: #e4f3f3; margin-left: 10px; }

.columns { display: flex; align-items: flex-start; gap: 16px; padding-left: 16px; }
.col { width: 300px; flex: none; background: #eff0f5; border-radius: 8px; overflow: hidden; }
.col-head { height: 40px; display: flex; align-items: center; padding: 0 12px 0 10px; color: #fff; }
.h-purple { background: #6a55e2; }
.h-green { background: #2ad38c; }
.h-blue { background: #1a83f6; }
.col-title { font-size: 15px; font-weight: 700; }
.count { margin-left: 10px; height: 19px; line-height: 19px; padding: 0 8px; border-radius: 10px; background: #fff; font-size: 14px; }
.c-purple { color: #6a55e2; }
.c-green { color: #2ad38c; }
.c-blue { color: #1a83f6; }
.quota { margin-left: 10px; height: 19px; line-height: 19px; padding: 0 8px; border-radius: 10px; font-size: 14px; }
.q-purple { color: #3d60e8; background: #6254e2; }
.q-green { color: #14a8bb; background: #25c893; }
.col-dots { margin-left: auto; }
.cards { padding: 7px 8px 0; display: flex; flex-direction: column; gap: 8px; }
.cards-scroll { padding-bottom: 6px; }
.card { background: #fff; border-radius: 4px; padding: 8px 8px 6px; }
.task { margin: 0; font-size: 14px; line-height: 20px; color: #2b2d36; }
.box { display: inline-block; width: 14px; height: 14px; border: 1px solid #d5d8e2; border-radius: 2px; margin-right: 8px; vertical-align: -2px; }
.task-done { color: #8c8e96; }
.tick { display: inline-block; margin: 0 6px 0 1px; vertical-align: -1px; }
.meta { height: 20px; display: flex; align-items: center; font-size: 12px; font-weight: 500; }
.meta-bare { height: 18px; }
.av { margin-right: 8px; }
.d { margin-right: 8px; letter-spacing: .1px; }
.d-gray { color: #a6adc2; }
.d-green { color: #2bd07e; }
.d-orange { color: #f5a042; }
.chip { height: 16px; line-height: 16px; padding: 0 5px; border-radius: 3px; background: #e3f0fc; color: #2b82ec; }
.lines { margin-right: 9px; }
.eye { margin-left: 9px; }
.newtask { display: block; margin: 0 10px; padding: 11px 0 10px; line-height: 20px; font-size: 14px; color: #b7bccb; text-decoration: underline; }

.col-add { width: 40px; height: 100px; background: #eff0f5; border-radius: 6px; color: #aeb4c7; font-size: 14px; font-weight: 500; text-align: center; padding-top: 10px; }

/* right panel */
.side { width: 48px; flex: none; background: #fff; display: flex; flex-direction: column; align-items: center; padding-top: 15px; }
.side svg + svg { margin-top: 25px; }
.side-rule { width: 16px; height: 1px; background: #eceef2; margin-top: 24px; }
.who { position: relative; width: 28px; height: 28px; border-radius: 50%; flex: none; text-align: center; }
.who-q { background: #eef0f6; margin-top: 20px; }
.who-gray { background: #d6d9e0; margin-top: 17px; }
.who-mark { display: block; color: #a9afc6; font-size: 14px; line-height: 20px; padding-top: 2px; height: 18px; overflow: visible; }
.who-num { position: absolute; top: 18px; left: 7px; width: 15px; height: 17px; line-height: 17px; border-radius: 5px; background: #e4e6ee; color: #7a80a0; font-size: 12px; }
.num-wide { left: 3px; width: 22px; }
.side .side-collapse { margin-top: auto; margin-bottom: 18px; }

/* dock */
.dockbar { flex: 1; display: flex; justify-content: center; align-items: flex-start; padding-top: 2px; }
.dock {
  width: 784px;
  height: 43px;
  background: #4a4b4b;
  border-radius: 12px;
  display: flex;
  align-items: flex-start;
  padding: 6px 0 0 7px;
  gap: 8px;
}
.di { width: 26px; height: 26px; flex: none; position: relative; }
.di svg { width: 26px; height: 26px; overflow: visible; }
.di.on::after { content: ""; position: absolute; left: 11px; top: 31px; width: 4px; height: 4px; border-radius: 50%; background: #0c0c0c; }
.badge { position: absolute; top: -3px; right: -4px; min-width: 12px; height: 12px; border-radius: 6px; background: #e8363a; color: #fff; font-size: 8px; line-height: 12px; text-align: center; padding: 0 2px; }
.dock-sep { width: 1px; height: 32px; background: #2a2a2a; flex: none; margin: 0 3px; }
.dk { font-family: Roboto, sans-serif; }
.dk-feb { font-size: 5px; font-weight: 700; fill: #fff; }
.dk-day { font-size: 16px; fill: #333; }
.dk-tv { font-size: 11px; font-weight: 500; fill: #fff; }
.dk-w { font-size: 12px; font-weight: 700; fill: #fff; }
```
